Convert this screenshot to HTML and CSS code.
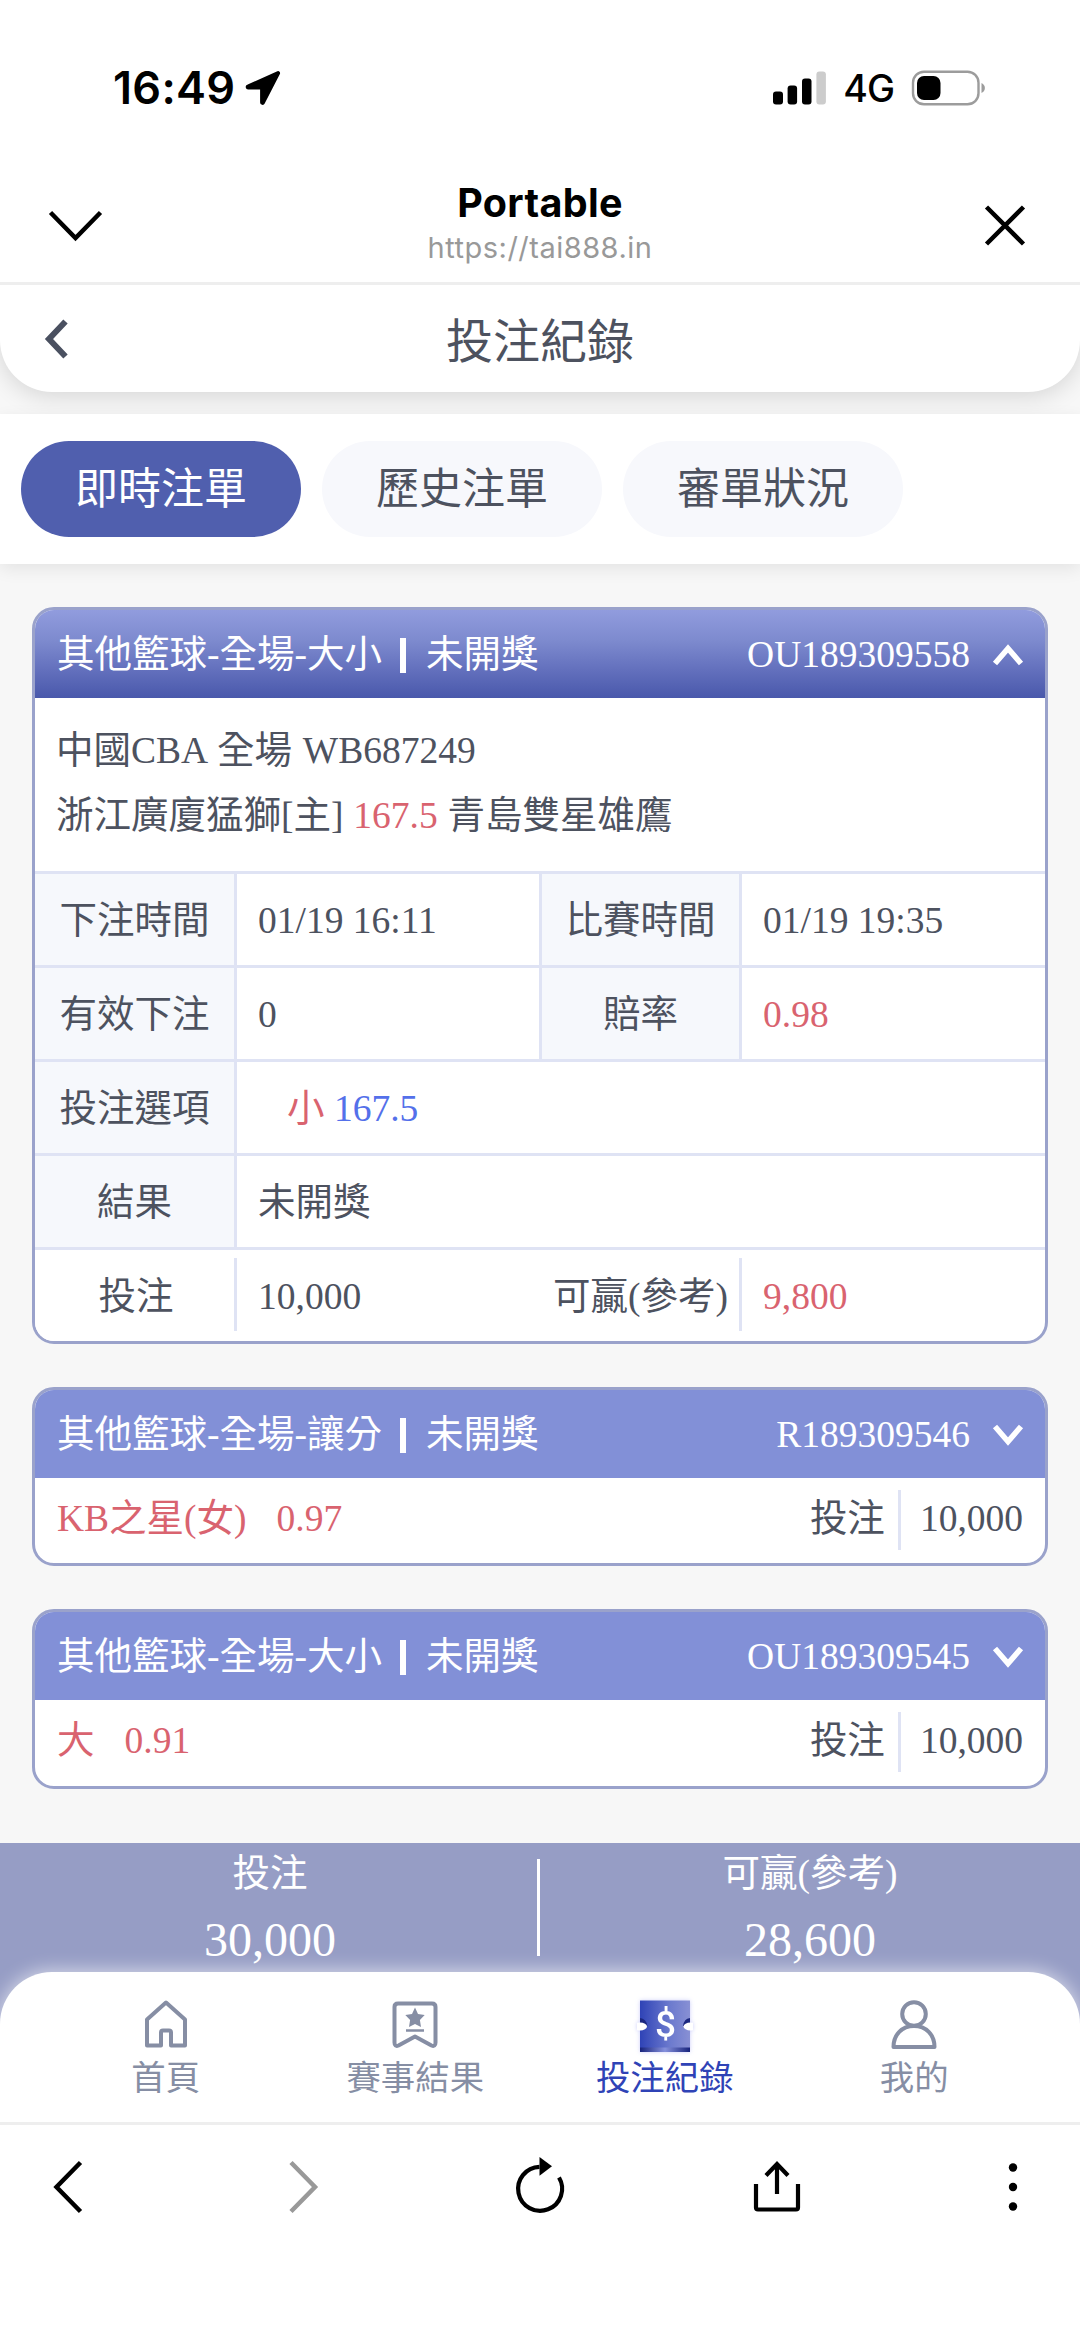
FILE: index.html
```html
<!DOCTYPE html>
<html lang="zh-Hant">
<head>
<meta charset="utf-8">
<title>投注紀錄</title>
<link rel="stylesheet" href="styles.css">
</head>
<body>
<div class="phone">
  <header class="status">
    <div class="status-left">
      <span class="clock">16:49</span>
      <svg class="loc" width="38" height="38" viewBox="0 0 38 38"><path d="M33.800 3.200 3.600 16.800a1.300 1.300 0 0 0 .5 2.500H17.200V33.500a1.300 1.300 0 0 0 2.500.5L34.900 4.400a.9.9 0 0 0-1.100-1.200Z" stroke="#000" stroke-width="2.200" stroke-linejoin="round"/></svg>
    </div>
    <div class="status-right">
      <svg width="54" height="34" viewBox="0 0 54 34"><rect x="0" y="20.500" width="10" height="13" rx="3"/><rect x="14.600" y="14.500" width="9.500" height="19" rx="3"/><rect x="29" y="7.500" width="9.500" height="26" rx="3"/><rect x="43.400" y="0.500" width="9.500" height="33" rx="3" fill="#ccc"/></svg>
      <span class="net">4G</span>
      <svg width="76" height="36" viewBox="0 0 76 36"><rect x="2" y="1.700" width="65.500" height="32.600" rx="11" fill="none" stroke="#9c9c9c" stroke-width="2.400"/><rect x="6" y="6" width="23.500" height="24" rx="7"/><path d="M70.500 13c4.500 2 4.500 8 0 10Z" fill="#9c9c9c"/></svg>
    </div>
  </header>

  <div class="browser-bar">
    <svg width="56" height="34" viewBox="0 0 56 34"><path d="M3.500 4.500 28.500 30 53.500 4.500" fill="none" stroke="#000" stroke-width="4.500"/></svg>
    <div class="site">
      <div class="site-name">Portable</div>
      <div class="site-url">https://tai888.in</div>
    </div>
    <svg width="42" height="42" viewBox="0 0 42 42"><path d="M2.500 3 39.500 40M39.500 3 2.500 40" fill="none" stroke="#000" stroke-width="4.500"/></svg>
  </div>

  <main class="page">
    <div class="page-head">
      <svg width="26" height="42" viewBox="0 0 26 42"><path d="M21.500 3.500 5 21 21.500 38.500" fill="none" stroke="#4a5060" stroke-width="6"/></svg>
      <h1>投注紀錄</h1>
      <span></span>
    </div>
    <nav class="tabs">
      <a class="tab active">即時注單</a>
      <a class="tab">歷史注單</a>
      <a class="tab">審單狀況</a>
    </nav>

    <div class="cards">
      <section class="card">
        <div class="card-head open">
          <span>其他籃球-全場-大小</span><i class="bar"></i><span>未開獎</span>
          <span class="code">OU189309558</span>
          <svg class="chev" width="34" height="24" viewBox="0 0 34 24"><path d="M4 20.500 17 5.500 30 20.500" fill="none" stroke="#fff" stroke-width="5.500"/></svg>
        </div>
        <div class="intro">
          <div class="league">中國CBA 全場 WB687249</div>
          <div class="match">浙江廣廈猛獅[主] <span class="red">167.5</span> 青島雙星雄鷹</div>
        </div>
        <div class="grid">
          <div class="label">下注時間</div><div class="value">01/19 16:11</div><div class="label mid">比賽時間</div><div class="value end">01/19 19:35</div>
          <div class="label">有效下注</div><div class="value">0</div><div class="label mid">賠率</div><div class="value end red">0.98</div>
          <div class="label">投注選項</div><div class="value wide"><span class="pick"><span class="red">小</span> <span class="blue">167.5</span></span></div>
          <div class="label">結果</div><div class="value wide">未開獎</div>
          <div class="label foot">投注</div><div class="value foot">10,000</div><div class="label foot">可贏(參考)</div><div class="value foot end red">9,800</div>
        </div>
      </section>

      <section class="card">
        <div class="card-head">
          <span>其他籃球-全場-讓分</span><i class="bar"></i><span>未開獎</span>
          <span class="code">R189309546</span>
          <svg class="chev" width="34" height="24" viewBox="0 0 34 24"><path d="M4 3.500 17 18.500 30 3.500" fill="none" stroke="#fff" stroke-width="5.500"/></svg>
        </div>
        <div class="brief">
          <span class="red">KB之星(女)</span><span class="red odds">0.97</span>
          <span class="stake">投注</span><span class="amount">10,000</span>
        </div>
      </section>

      <section class="card last">
        <div class="card-head">
          <span>其他籃球-全場-大小</span><i class="bar"></i><span>未開獎</span>
          <span class="code">OU189309545</span>
          <svg class="chev" width="34" height="24" viewBox="0 0 34 24"><path d="M4 3.500 17 18.500 30 3.500" fill="none" stroke="#fff" stroke-width="5.500"/></svg>
        </div>
        <div class="brief">
          <span class="red">大</span><span class="red odds">0.91</span>
          <span class="stake">投注</span><span class="amount">10,000</span>
        </div>
      </section>
    </div>

    <div class="dock">
      <div class="summary">
        <div class="sum"><div class="sum-label">投注</div><div class="sum-value">30,000</div></div>
        <div class="sum"><div class="sum-label">可贏(參考)</div><div class="sum-value">28,600</div></div>
      </div>
      <nav class="nav">
        <a class="nav-item">
          <svg width="56" height="56" viewBox="0 0 56 56"><path d="M28 6.500 9 23.500V49.500H23V36.500Q23 34.500 25 34.500H31Q33 34.500 33 36.500V49.500H47V23.500Z" fill="none" stroke="#868ea4" stroke-width="4" stroke-linejoin="round"/></svg>
          <span>首頁</span>
        </a>
        <a class="nav-item">
          <svg width="56" height="56" viewBox="0 0 56 56"><path d="M11 7.500H45Q48.500 7.500 48.500 11V46.500Q48.500 51 44.500 49.500L28 40.500 11.500 49.500Q7.500 51 7.500 46.500V11Q7.500 7.500 11 7.500Z" fill="none" stroke="#868ea4" stroke-width="4" stroke-linejoin="round"/><path d="M28 11.500 31 18 37.700 19 32.900 24 34 31 28 28 22 31 23.100 24 18.300 19 25 18Z" fill="#868ea4"/><path d="M19 34.500H37" stroke="#868ea4" stroke-width="2.500"/></svg>
          <span>賽事結果</span>
        </a>
        <a class="nav-item active">
          <svg class="ticket" width="56" height="56" viewBox="0 0 56 56">
            <defs>
              <linearGradient id="tk"><stop offset="0" stop-color="#2f43b6"/><stop offset=".6" stop-color="#6c7ace"/><stop offset="1" stop-color="#8890d4"/></linearGradient>
              <linearGradient id="edge"><stop offset="0" stop-color="#17237c"/><stop offset=".5" stop-color="#8590dc"/><stop offset="1" stop-color="#17237c"/></linearGradient>
            </defs>
            <path d="M3 4.500H53V56H3Z" fill="url(#tk)"/>
            <path d="M3 51.500H53V56H3Z" fill="url(#edge)"/>
            <path d="M3 22Q9 22.500 10.500 30H3ZM53 22Q47 22.500 46 30H53Z" fill="#1b277f"/>
            <ellipse cx="3" cy="30.500" rx="7" ry="4" fill="#fff"/><ellipse cx="53.500" cy="30.500" rx="7" ry="4" fill="#fff"/>
            <text x="28.500" y="40.500" class="dollar">$</text>
          </svg>
          <span>投注紀錄</span>
        </a>
        <a class="nav-item">
          <svg width="56" height="56" viewBox="0 0 56 56"><g fill="none" stroke="#868ea4" stroke-width="4"><circle cx="28" cy="18" r="11.800"/><path d="M7.500 51C7.500 38.500 16 30 28 30S48.500 38.500 48.500 51Z" stroke-linejoin="round"/></g></svg>
          <span>我的</span>
        </a>
      </nav>
    </div>
  </main>

  <footer class="toolbar">
    <svg width="56" height="60" viewBox="0 0 56 60"><path d="M41.500 5.500 17.500 30 41.500 54.500" fill="none" stroke="#000" stroke-width="4.500"/></svg>
    <svg width="56" height="60" viewBox="0 0 56 60"><path d="M15 5.500 39 30 15 54.500" fill="none" stroke="#999" stroke-width="4.500"/></svg>
    <svg width="56" height="60" viewBox="0 0 56 60"><path d="M28 9.800A22 22 0 1 0 47.500 20.500" fill="none" stroke="#000" stroke-width="4.200" transform="translate(-.5)"/><path d="M27.500 0 40 9.300 27.500 18.800Z"/></svg>
    <svg width="56" height="60" viewBox="0 0 56 60"><path d="M7 27V50.500Q7 52.500 9 52.500H47Q49 52.500 49 50.500V27M28 37V7M17 18.500 28 7 39 18.500" fill="none" stroke="#000" stroke-width="4.200"/></svg>
    <svg width="56" height="60" viewBox="0 0 56 60"><circle cx="28" cy="10.500" r="4.200"/><circle cx="28" cy="30" r="4.200"/><circle cx="28" cy="49.500" r="4.200"/></svg>
  </footer>
</div>
</body>
</html>
```
FILE: styles.css
```css
* { box-sizing: border-box; }
body { margin: 0; background: #fff; }
svg { display: block; flex: none; }

.phone {
  display: flex;
  flex-direction: column;
  width: 1080px;
  height: 2348px;
  overflow: hidden;
  font-family: "Liberation Serif", "Noto Sans CJK TC", serif;
  font-size: 37.500px;
  color: #4d525f;
  white-space: nowrap;
}

/* system status bar */
.status {
  display: flex;
  justify-content: space-between;
  height: 174px;
  padding: 0 93px 0 113px;
  font-family: Inter, "Liberation Sans", sans-serif;
  color: #000;
}
.status-left, .status-right { display: flex; align-items: center; height: 175px; }
.clock { font-size: 45px; font-weight: 600; letter-spacing: .3px; }
.loc { margin-left: 9px; }
.net { margin: 2px 17px 0 16px; font-size: 37.500px; font-weight: 500; letter-spacing: -1px; }

/* in-app browser bar */
.browser-bar {
  position: relative;
  z-index: 1;
  display: grid;
  grid-template-columns: 60px 1fr 60px;
  align-items: center;
  justify-items: end;
  height: 111px;
  padding: 0 54px 6px 47px;
  background: #fff;
  border-bottom: 3px solid #eee;
  font-family: Inter, "Liberation Sans", sans-serif;
  text-align: center;
}
.browser-bar > svg:first-child { justify-self: start; }
.site { justify-self: center; margin-left: 7px; }
.site-name { font-size: 39.500px; font-weight: 700; line-height: 46px; color: #000; letter-spacing: .3px; }
.site-url { font-size: 29px; line-height: 44px; color: #999; letter-spacing: .5px; }

/* page */
.page { display: flex; flex-direction: column; height: 1837px; background: #f7f7f7; }
.page-head {
  display: grid;
  grid-template-columns: 80px 1fr 80px;
  align-items: center;
  height: 107px;
  padding: 0 44px;
  background: #fff;
  border-radius: 0 0 52px 52px;
  box-shadow: 0 4px 24px rgba(0, 0, 0, .14);
}
.page-head h1 { margin: 6px 0 0; font-size: 47px; font-weight: 400; line-height: 60px; text-align: center; }
.tabs {
  position: relative;
  display: flex;
  gap: 21px;
  height: 150px;
  margin-top: 22px;
  padding: 27px 21px;
  background: #fff;
  box-shadow: 0 5px 16px rgba(0, 0, 0, .08);
}
.tab {
  width: 280px;
  border-radius: 48px;
  background: #f7f8fc;
  font-size: 43px;
  line-height: 97px;
  text-align: center;
}
.tab.active { background: #505fae; color: #fff; }

.cards { display: flex; flex-direction: column; gap: 43px; height: 1279px; padding: 43px 32px 0; }
.card { border: 3px solid #9aa2cb; border-radius: 22px; background: #fff; overflow: hidden; }
.card-head {
  display: flex;
  align-items: center;
  height: 88px;
  padding: 1px 20px 0 22px;
  background: #8290d7;
  color: #fff;
  line-height: 86px;
}
.card-head.open { background: linear-gradient(#919cde, #7d8ace 35%, #6370bd 68%, #4958ab); }
.bar { width: 6px; height: 35px; margin: 2px 20px 0 18px; background: #fff; }
.code { margin-left: auto; }
.chev { margin-left: 21px; }
.red { color: #d9636f; }
.blue { color: #5470ea; }

.intro { height: 173px; padding: 21px 22px 0 21px; line-height: 64.700px; }
.league { word-spacing: 1.500px; }
.match { word-spacing: .5px; }
.grid {
  display: grid;
  grid-template-columns: 202px 302px 203px 303px;
  grid-auto-rows: 94px;
}
.grid > div { border-top: 3px solid #dfe3f4; line-height: 93px; }
.label { background: #f6f8fc; border-right: 3px solid #dfe3f4; text-align: center; }
.label.mid { border-left: 3px solid #dfe3f4; }
.value { padding-left: 21px; }
.value.end { padding-left: 21px; }
.wide { grid-column: span 3; }
.pick { padding-left: 29px; }
.label.foot {
  border-right: 0;
  background: linear-gradient(#dfe3f4, #dfe3f4) no-repeat right 8px / 3px 73px, #fff;
}

.brief { display: flex; height: 85px; padding: 0 22px; line-height: 82px; }
.card.last .brief { height: 86px; }
.odds { margin-left: 30px; }
.stake { margin-left: auto; padding-right: 13px; }
.amount {
  padding-left: 22px;
  background: linear-gradient(#dfe3f4, #dfe3f4) no-repeat left 12px / 3px 60px;
}

/* totals strip and bottom navigation */
.dock { height: 279px; background: #969dc5; }
.summary { display: flex; height: 129px; color: #fff; text-align: center; }
.sum { flex: 1; }
.sum:first-child { background: linear-gradient(#fff, #fff) no-repeat right 16px / 3px 97px; }
.sum-label { height: 62px; line-height: 62px; }
.sum-value { font-size: 48px; line-height: 70px; }
.nav {
  display: flex;
  height: 150px;
  padding: 24px 41px 0;
  background: #fff;
  border-radius: 52px 52px 0 0;
  box-shadow: 0 0 18px 2px rgba(255, 255, 255, .6);
}
.nav-item {
  display: flex;
  flex: 1;
  flex-direction: column;
  align-items: center;
  font-size: 34.400px;
  line-height: 52px;
  color: #868ea4;
}
.nav-item.active { color: #2f43b6; }
.ticket { filter: drop-shadow(0 0 2px rgba(110, 115, 240, .35)); }
.dollar { font: 500 37px Roboto, sans-serif; text-anchor: middle; fill: #fff; }

/* browser toolbar */
.toolbar {
  display: flex;
  justify-content: space-between;
  height: 226px;
  padding: 32px 39px 0;
  border-top: 3px solid #eee;
}
```
